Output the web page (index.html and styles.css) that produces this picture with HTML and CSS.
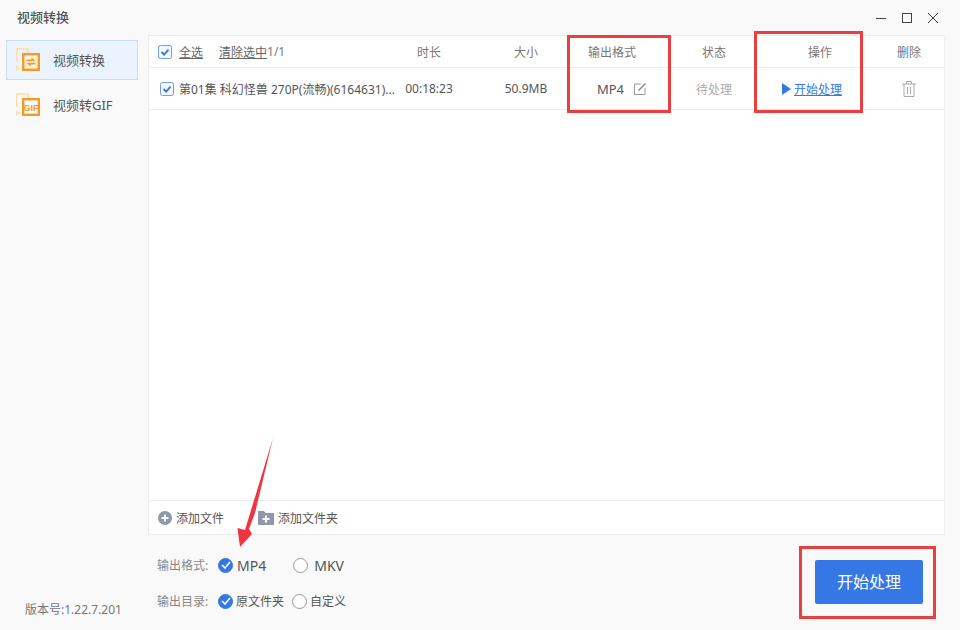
FILE: index.html

```html
<!DOCTYPE html>
<html lang="zh-CN">
<head>
  <meta charset="UTF-8" />
  <title>视频转换</title>
  <link rel="stylesheet" href="styles.css">
</head>
<body>
  <div class="app">
    <header class="titlebar">
      <span class="app-title">视频转换</span>
      <div class="win-btns">
        <svg width="12" height="12" viewBox="0 0 12 12"><path d="M1 6.500h10" class="win-line"/></svg>
        <svg width="12" height="12" viewBox="0 0 12 12"><rect x="1.500" y="1.500" width="9" height="9" class="win-line"/></svg>
        <svg width="12" height="12" viewBox="0 0 12 12"><path d="M1 1l10 10M11 1L1 11" class="win-line"/></svg>
      </div>
    </header>

    <div class="content">
      <aside class="sidebar">
        <div class="nav-item active">
          <svg class="nav-icon" width="26" height="26" viewBox="0 0 26 26">
            <path d="M.8 15V2h11.400v4M.8 1.800h4" fill="none" stroke="#fbdfae" stroke-width="1.600"/>
            <path d="M0 18l4 3-4 3z" fill="#fbdfae"/>
            <rect x="7.200" y="7.200" width="15.600" height="15.600" fill="#fdf3e1" stroke="#f59a23" stroke-width="2.400"/>
            <path d="M10.500 14.200h9l-4-4v2.400h-5zM19.500 15.800h-9l4 4v-2.400h5z" fill="#f59a23"/>
          </svg>
          <span class="nav-label">视频转换</span>
        </div>
        <div class="nav-item">
          <svg class="nav-icon" width="26" height="26" viewBox="0 0 26 26">
            <path d="M.8 15V2h11.400v4M.8 1.800h4" fill="none" stroke="#fbdfae" stroke-width="1.600"/>
            <path d="M0 18l4 3-4 3z" fill="#fbdfae"/>
            <rect x="7.200" y="7.200" width="15.600" height="15.600" fill="#fff" stroke="#f59a23" stroke-width="2.400"/>
            <text x="15" y="19.200" class="gif-text">GIF</text>
          </svg>
          <span class="nav-label">视频转GIF</span>
        </div>
        <div class="version">版本号:1.22.7.201</div>
      </aside>

      <main class="main">
        <section class="panel">
          <div class="row head-row">
            <div class="cell name-cell">
              <svg class="check" width="14" height="14" viewBox="0 0 14 14"><rect x=".5" y=".5" width="13" height="13" rx="2" fill="#f3f7fe" stroke="#6f9be8"/><path d="M3.500 7l2.600 2.600 4.400-5" fill="none" stroke="#3578e5" stroke-width="1.800"/></svg>
              <a class="plain-link">全选</a>
              <a class="plain-link clear-link">清除选中</a><span>1/1</span>
            </div>
            <div class="cell">时长</div>
            <div class="cell size-cell">大小</div>
            <div class="cell">输出格式</div>
            <div class="cell">状态</div>
            <div class="cell">操作</div>
            <div class="cell">删除</div>
          </div>

          <div class="row file-row">
            <div class="cell name-cell file-name">
              <svg class="check" width="14" height="14" viewBox="0 0 14 14"><rect x=".5" y=".5" width="13" height="13" rx="2" fill="#f3f7fe" stroke="#6f9be8"/><path d="M3.500 7l2.600 2.600 4.400-5" fill="none" stroke="#3578e5" stroke-width="1.800"/></svg>
              <span>第01集 科幻怪兽 270P(流畅)(6164631)...</span>
            </div>
            <div class="cell">00:18:23</div>
            <div class="cell size-cell">50.9MB</div>
            <div class="cell format-cell">
              <span class="format-name">MP4</span>
              <svg width="14" height="14" viewBox="0 0 14 14"><path d="M8 2H1.500v10.500H12V6" fill="none" stroke="#999"/><path d="M5.500 8.500l7-7" fill="none" stroke="#888" stroke-width="1.400"/></svg>
            </div>
            <div class="cell pending">待处理</div>
            <div class="cell op-cell">
              <svg width="9" height="12" viewBox="0 0 9 12"><path d="M0 0l9 6-9 6z" fill="#3578e5"/></svg>
              <a class="start-link">开始处理</a>
            </div>
            <div class="cell">
              <svg width="14" height="16" viewBox="0 0 14 16"><path d="M0 3h14M4.500 3V.5h5V3M2 3v12.500h10V3M5.500 6v7M8.500 6v7" fill="none" stroke="#aaa"/></svg>
            </div>
          </div>

          <div class="panel-fill"></div>

          <div class="add-bar">
            <span class="add-btn">
              <svg width="14" height="14" viewBox="0 0 14 14"><circle cx="7" cy="7" r="7" fill="#8f98ab"/><path d="M7 3.500v7M3.500 7h7" stroke="#fff" stroke-width="2"/></svg>
              添加文件
            </span>
            <span class="add-btn">
              <svg width="16" height="14" viewBox="0 0 16 14"><path d="M0 0h6l1.500 2H16v12H0z" fill="#8f98ab"/><path d="M8 4.500v7M4.500 8h7" stroke="#fff" stroke-width="2"/></svg>
              添加文件夹
            </span>
          </div>
        </section>

        <section class="bottom">
          <div class="options">
            <div class="opt-row">
              <span class="opt-label">输出格式:</span>
              <span class="radio on"><svg width="10" height="8" viewBox="0 0 10 8"><path d="M1 4l3 3 5-6" fill="none" stroke="#fff" stroke-width="1.600"/></svg></span>
              <span class="opt-big">MP4</span>
              <span class="radio mkv-radio"></span>
              <span class="opt-big mkv-text">MKV</span>
            </div>
            <div class="opt-row">
              <span class="opt-label">输出目录:</span>
              <span class="radio on"><svg width="10" height="8" viewBox="0 0 10 8"><path d="M1 4l3 3 5-6" fill="none" stroke="#fff" stroke-width="1.600"/></svg></span>
              <span class="opt-dir">原文件夹</span>
              <span class="radio dir-radio"></span>
              <span class="opt-dir">自定义</span>
            </div>
          </div>
          <button class="start-btn">开始处理</button>
        </section>
      </main>
    </div>

    <!-- annotations drawn on top of the screenshot -->
    <div class="mark mark-format"></div>
    <div class="mark mark-op"></div>
    <div class="mark mark-start"></div>
    <svg class="arrow" width="50" height="120" viewBox="0 0 50 120">
      <path d="M39 1L21 76l-6 16 3 5-12 13-2.500-19 7.500 2z" fill="#f0353f"/>
    </svg>
  </div>
</body>
</html>
```

FILE: styles.css

```css
* {
  box-sizing: border-box;
}
html, body {
  margin: 0;
  padding: 0;
}
body {
  font-family: "Noto Sans", "Noto Sans CJK SC", sans-serif;
  font-size: 12px;
  color: #555;
  background: #f9f9f9;
}
.app {
  position: relative;
  width: 960px;
  height: 630px;
  overflow: hidden;
  display: flex;
  flex-direction: column;
}

/* title bar */
.titlebar {
  height: 35px;
  flex: none;
  display: flex;
  align-items: center;
  justify-content: space-between;
  padding: 0 21px 0 17px;
}
.app-title {
  font-size: 13px;
  font-weight: 500;
  color: #555;
  margin-bottom: 2px;
}
.win-btns {
  display: flex;
  gap: 14px;
}
.win-line {
  fill: none;
  stroke: #444;
  stroke-width: 1;
}

.content {
  flex: 1;
  display: flex;
  min-height: 0;
}

/* left nav */
.sidebar {
  width: 148px;
  flex: none;
  display: flex;
  flex-direction: column;
  padding: 5px 10px 12px 6px;
}
.nav-item {
  height: 40px;
  margin-bottom: 5px;
  display: flex;
  align-items: center;
  gap: 11px;
  padding-left: 9px;
  font-size: 13px;
  border: 1px solid transparent;
}
.nav-item.active {
  background: #eaf3fe;
  border-color: #c8dcf3;
}
.nav-icon {
  flex: none;
}
.nav-label {
  margin-bottom: 2px;
}
.gif-text {
  font-size: 9px;
  font-weight: bold;
  font-family: "Liberation Sans", sans-serif;
  fill: #f59a23;
  text-anchor: middle;
}
.version {
  margin-top: auto;
  padding-left: 19px;
  color: #777;
}

/* file list */
.main {
  flex: 1;
  display: flex;
  flex-direction: column;
  padding-right: 15px;
  min-width: 0;
}
.panel {
  height: 500px;
  flex: none;
  display: flex;
  flex-direction: column;
  background: #fff;
  border: 1px solid #ebebeb;
  border-right-color: #f1f1f1;
}
.row {
  display: grid;
  grid-template-columns: 252px 56px 105px 100px 104px 108px 70px;
  align-items: center;
  border-bottom: 1px solid #ebebeb;
  white-space: nowrap;
}
.head-row {
  height: 32px;
  flex: none;
  color: #777;
}
.file-row {
  height: 42px;
  flex: none;
}
.cell {
  text-align: center;
  display: flex;
  align-items: center;
  justify-content: center;
}
.name-cell {
  justify-content: flex-start;
  padding-left: 9px;
}
.check {
  flex: none;
  margin-right: 7px;
}
.file-name {
  padding-left: 11px;
}
.file-name .check {
  margin-right: 5px;
}
.file-name span {
  overflow: hidden;
}
.plain-link {
  color: #666;
  text-decoration: underline;
}
.clear-link {
  margin-left: 16px;
}
.size-cell {
  padding-left: 33px;
}
.format-cell {
  gap: 9px;
  padding-left: 20px;
}
.format-name {
  font-size: 13px;
}
.pending {
  color: #aaa;
}
.op-cell {
  gap: 3px;
  padding-right: 16px;
}
.start-link {
  color: #3578e5;
  text-decoration: underline;
}
.panel-fill {
  flex: 1;
}
.add-bar {
  height: 34px;
  flex: none;
  display: flex;
  align-items: center;
  gap: 34px;
  padding-left: 9px;
  border-top: 1px solid #ebebeb;
}
.add-btn {
  display: flex;
  align-items: center;
  gap: 4px;
}

/* bottom options */
.bottom {
  flex: 1;
  display: flex;
  justify-content: space-between;
  align-items: flex-start;
}
.options {
  padding: 18px 0 0 9px;
}
.opt-row {
  height: 24px;
  margin-bottom: 12px;
  display: flex;
  align-items: center;
}
.opt-label {
  width: 61px;
  color: #888;
}
.radio {
  width: 15px;
  height: 15px;
  flex: none;
  border-radius: 50%;
  border: 1px solid #999;
  background: #fff;
  display: flex;
  align-items: center;
  justify-content: center;
}
.radio.on {
  background: #3578e5;
  border-color: #3578e5;
}
.opt-big {
  margin-left: 4px;
  font-size: 14px;
}
.mkv-radio {
  margin-left: 27px;
}
.mkv-text {
  margin-left: 6px;
}
.opt-dir {
  margin-left: 3px;
}
.dir-radio {
  margin-left: 8px;
}
.start-btn {
  width: 108px;
  height: 44px;
  margin: 25px 22px 0 0;
  padding: 0 0 2px;
  border: none;
  border-radius: 2px;
  background: #3578e5;
  color: #fff;
  font-family: inherit;
  font-size: 16px;
}

/* red annotations */
.mark {
  position: absolute;
  border: 3px solid #e8403f;
}
.mark-format {
  left: 567px;
  top: 35px;
  width: 104px;
  height: 78px;
}
.mark-op {
  left: 754px;
  top: 31px;
  width: 109px;
  height: 82px;
}
.mark-start {
  left: 799px;
  top: 546px;
  width: 137px;
  height: 73px;
}
.arrow {
  position: absolute;
  left: 234px;
  top: 437px;
}
```
